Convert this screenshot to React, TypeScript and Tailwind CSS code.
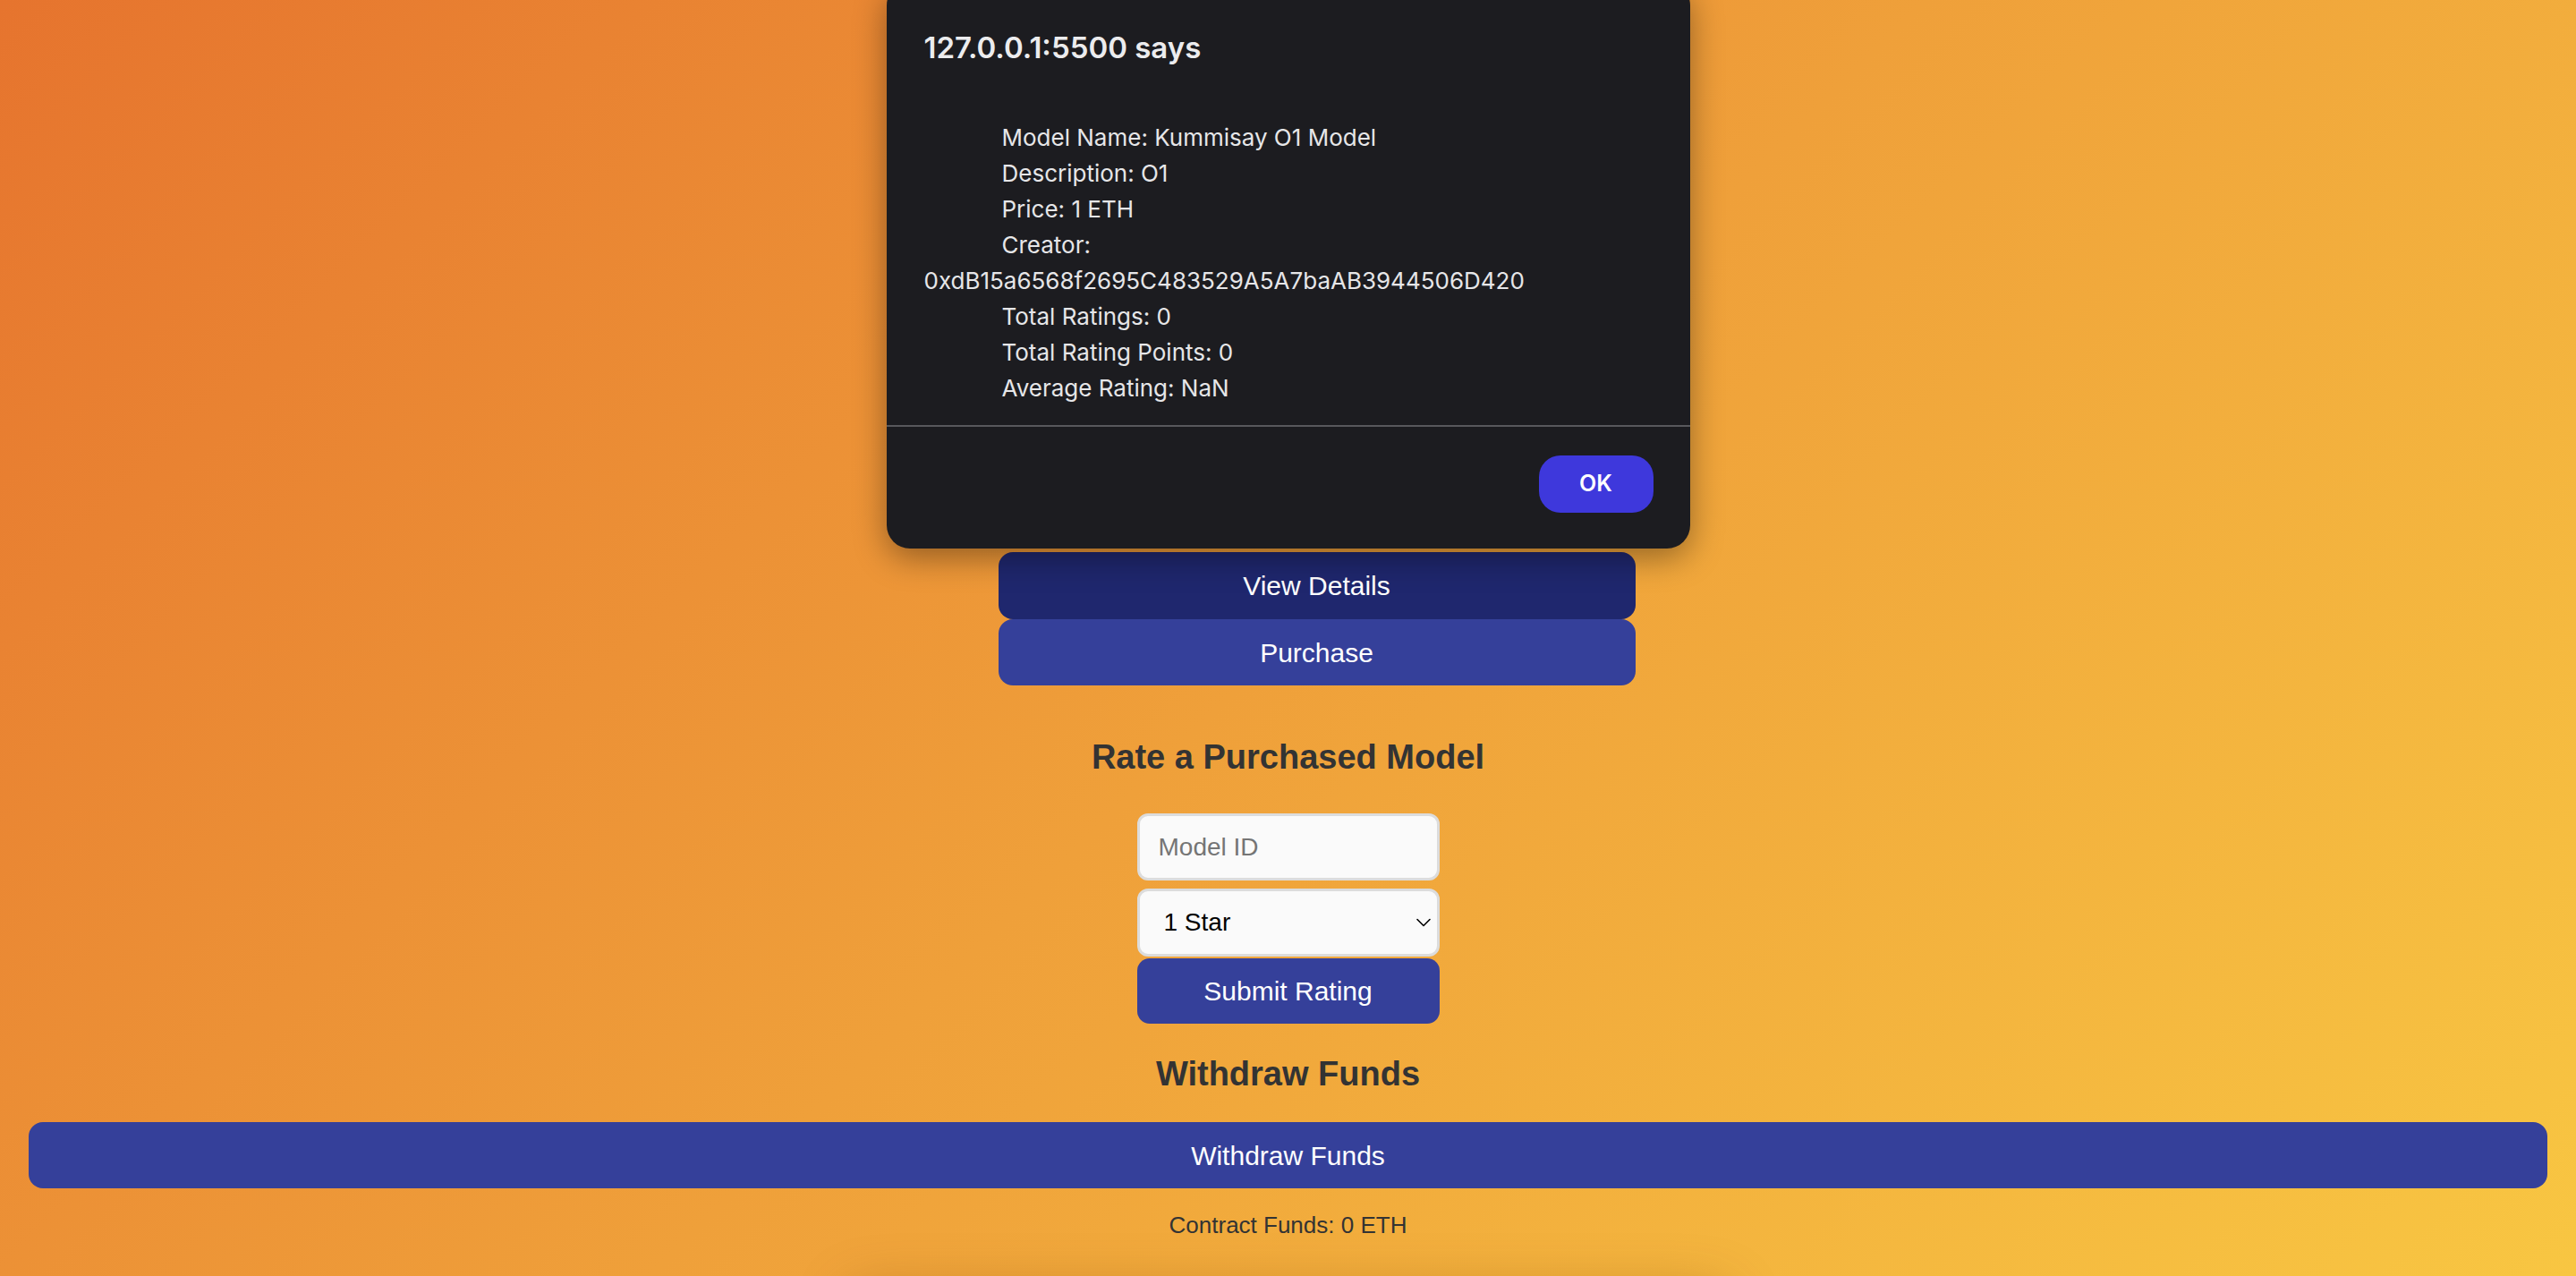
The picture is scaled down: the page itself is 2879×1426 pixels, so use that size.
import { ChevronDown } from "lucide-react";

const detailLines = [
  { text: "Model Name: Kummisay O1 Model", indent: true },
  { text: "Description: O1", indent: true },
  { text: "Price: 1 ETH", indent: true },
  { text: "Creator:", indent: true },
  { text: "0xdB15a6568f2695C483529A5A7baAB3944506D420", indent: false },
  { text: "Total Ratings: 0", indent: true },
  { text: "Total Rating Points: 0", indent: true },
  { text: "Average Rating: NaN", indent: true },
];

function AlertDialog() {
  return (
    <div
      role="alertdialog"
      className="absolute left-1/2 top-[-20px] w-[898px] -translate-x-1/2 rounded-[26px] bg-[#1c1c20] shadow-[0_10px_36px_rgba(0,0,0,0.38)] font-['Inter',sans-serif]"
    >
      <div className="px-[42px] pt-[53px]">
        <h2 className="h-[40px] text-[33px] font-semibold leading-[40px] text-[#ececee]">
          127.0.0.1:5500 says
        </h2>
        <div className="mt-[61px] text-[26px] leading-[40px] text-[#e6e6e8]">
          {detailLines.map((line) => (
            <p key={line.text} className={line.indent ? "pl-[87px]" : ""}>
              {line.text}
            </p>
          ))}
        </div>
      </div>
      <div className="mt-[21px] h-[2px] bg-[#58585c]" />
      <div className="flex justify-end px-[41px] pb-[40px] pt-[32px]">
        <button
          type="button"
          className="h-[64px] w-[128px] rounded-[24px] bg-[#3e38dc] text-[25px] font-semibold text-white"
        >
          OK
        </button>
      </div>
    </div>
  );
}

export default function App() {
  return (
    <div className="relative h-[1426px] overflow-hidden bg-[linear-gradient(135deg,#e6742e_0%,#efa03a_50%,#f8c642_100%)] font-['Liberation_Sans',Arial,sans-serif] text-[#333]">
      <main className="flex flex-col items-center">
        {/* model list area, hidden under the alert */}
        <div className="h-[617px]" aria-hidden="true" />

        <div className="flex w-[712px] translate-x-[32px] flex-col">
          <button
            type="button"
            className="h-[75px] rounded-[16px] bg-[#1f276e] text-[30px] text-white"
          >
            View Details
          </button>
          <button
            type="button"
            className="h-[74px] rounded-[16px] bg-[#35409a] text-[30px] text-white"
          >
            Purchase
          </button>
        </div>

        <h3 className="mt-[59px] text-[38px] font-bold leading-[42px] text-[#333]">
          Rate a Purchased Model
        </h3>

        <input
          type="text"
          placeholder="Model ID"
          className="mt-[42px] h-[75px] w-[338px] rounded-[12px] border-[3px] border-[#dcdcdc] bg-[#fafafa] px-[21px] text-[28px] text-black placeholder:text-[#757575] outline-none"
        />

        <div className="relative mt-[9px] w-[338px]">
          <select className="h-[76px] w-full appearance-none rounded-[12px] border-[3px] border-[#dcdcdc] bg-[#fafafa] pl-[27px] text-[28px] text-black outline-none">
            <option>1 Star</option>
            <option>2 Stars</option>
            <option>3 Stars</option>
            <option>4 Stars</option>
            <option>5 Stars</option>
          </select>
          <ChevronDown
            className="pointer-events-none absolute right-[4px] top-1/2 size-[28px] -translate-y-1/2 text-black"
            strokeWidth={1.4}
          />
        </div>

        <button
          type="button"
          className="mt-[2px] h-[73px] w-[338px] rounded-[14px] bg-[#35409a] text-[30px] text-white"
        >
          Submit Rating
        </button>

        <h3 className="mt-[35px] text-[38px] font-bold leading-[42px] text-[#333]">
          Withdraw Funds
        </h3>

        <div className="mt-[33px] self-stretch px-[32px]">
          <button
            type="button"
            className="h-[74px] w-full rounded-[16px] bg-[#35409a] text-[30px] text-white"
          >
            Withdraw Funds
          </button>
        </div>

        <p className="mt-[26px] text-[26px] leading-[30px] text-[#333]">Contract Funds: 0 ETH</p>

        <div className="mt-[60px] h-[300px] w-[980px] rounded-[20px] shadow-[0_0_60px_rgba(120,60,0,0.35)]" />
      </main>

      <AlertDialog />
    </div>
  );
}
